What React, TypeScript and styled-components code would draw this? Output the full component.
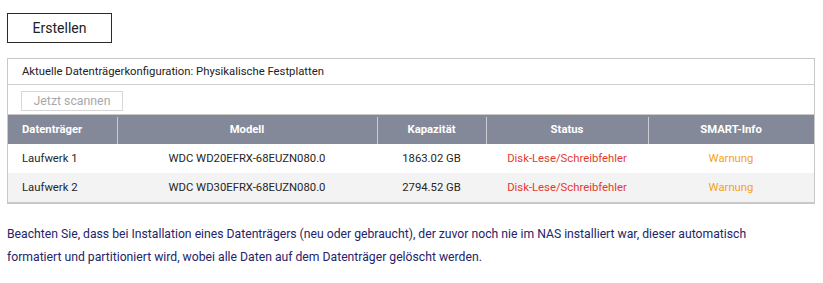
import React from "react";
import styled, { createGlobalStyle } from "styled-components";

const Global = createGlobalStyle`
  html, body { margin: 0; padding: 0; background: #fff; }
  body { font-family: Roboto, "Liberation Sans", Arial, sans-serif; }
`;

const Page = styled.div`
  padding: 13px 8px 0 7px;
  display: flex;
  flex-direction: column;
  align-items: flex-start;
`;

const PrimaryButton = styled.button`
  width: 105px;
  height: 30px;
  box-sizing: border-box;
  border: 1px solid #2a2a2a;
  background: #fff;
  font-family: Roboto, "Liberation Sans", sans-serif;
  font-size: 14px;
  color: #222;
  padding: 0;
  cursor: pointer;
`;

const Panel = styled.section`
  margin-top: 15px;
  width: 808px;
  box-sizing: border-box;
  border: 1px solid #c8c8c8;
  border-bottom-width: 2px;
`;

const PanelTitle = styled.div`
  height: 25px;
  display: flex;
  align-items: center;
  padding-left: 14px;
  font-size: 11.3px;
  color: #222;
  border-bottom: 1px solid #d0d0d0;
`;

const Toolbar = styled.div`
  height: 30px;
  box-sizing: border-box;
  padding: 5px 0 0 13px;
  border-bottom: 1px solid #c8c8c8;
`;

const GhostButton = styled.button`
  width: 102px;
  height: 20px;
  box-sizing: border-box;
  border: 1px solid #d6d6d6;
  background: #fff;
  color: #a8a8a8;
  font-family: Roboto, "Liberation Sans", sans-serif;
  font-size: 12.3px;
  padding: 0;
`;

const Table = styled.table`
  width: 100%;
  border-collapse: collapse;
  table-layout: fixed;
  font-size: 11.3px;
`;

const HeadCell = styled.th<{ $w?: number; $align?: string; $first?: boolean }>`
  box-sizing: border-box;
  width: ${(p) => (p.$w ? `${p.$w}px` : "auto")};
  height: 29px;
  padding: 0 ${(p) => (p.$align === "left" ? "14px" : "0")};
  background: #838998;
  color: #fff;
  font-weight: 700;
  text-align: ${(p) => p.$align || "center"};
  position: relative;
  &::before {
    content: "";
    display: ${(p) => (p.$first ? "none" : "block")};
    position: absolute;
    left: 0;
    top: 2px;
    bottom: 0;
    width: 1px;
    background: #c9ccd3;
  }
`;

const Row = styled.tr<{ $alt?: boolean }>`
  background: ${(p) => (p.$alt ? "#f3f3f3" : "#fff")};
  & + & td { border-top: 1px solid #cdcdcd; }
`;

const Cell = styled.td<{ $align?: string; $tone?: "error" | "warn" }>`
  box-sizing: border-box;
  height: 29px;
  padding: 0 ${(p) => (p.$align === "left" ? "14px" : "0")};
  text-align: ${(p) => p.$align || "center"};
  color: ${(p) =>
    p.$tone === "error" ? "#e5392f" : p.$tone === "warn" ? "#f5a31a" : "#262626"};
`;

const Note = styled.p`
  margin: 19px 0 0 0;
  font-size: 12.2px;
  line-height: 23px;
  color: #25246a;
  width: 770px;
`;

const drives = [
  { name: "Laufwerk 1", model: "WDC WD20EFRX-68EUZN080.0", cap: "1863.02 GB" },
  { name: "Laufwerk 2", model: "WDC WD30EFRX-68EUZN080.0", cap: "2794.52 GB" },
];

export default function App() {
  return (
    <>
      <Global />
      <Page>
        <PrimaryButton>Erstellen</PrimaryButton>
        <Panel>
          <PanelTitle>Aktuelle Datenträgerkonfiguration: Physikalische Festplatten</PanelTitle>
          <Toolbar>
            <GhostButton>Jetzt scannen</GhostButton>
          </Toolbar>
          <Table>
            <thead>
              <tr>
                <HeadCell $w={109} $align="left" $first>Datenträger</HeadCell>
                <HeadCell $w={260}>Modell</HeadCell>
                <HeadCell $w={109}>Kapazität</HeadCell>
                <HeadCell $w={162}>Status</HeadCell>
                <HeadCell>SMART-Info</HeadCell>
              </tr>
            </thead>
            <tbody>
              {drives.map((d, i) => (
                <Row key={d.name} $alt={i % 2 === 1}>
                  <Cell $align="left">{d.name}</Cell>
                  <Cell>{d.model}</Cell>
                  <Cell>{d.cap}</Cell>
                  <Cell $tone="error">Disk-Lese/Schreibfehler</Cell>
                  <Cell $tone="warn">Warnung</Cell>
                </Row>
              ))}
            </tbody>
          </Table>
        </Panel>
        <Note>
          Beachten Sie, dass bei Installation eines Datenträgers (neu oder gebraucht), der zuvor noch nie im NAS installiert war, dieser automatisch formatiert und partitioniert wird, wobei alle Daten auf dem Datenträger gelöscht werden.
        </Note>
      </Page>
    </>
  );
}
